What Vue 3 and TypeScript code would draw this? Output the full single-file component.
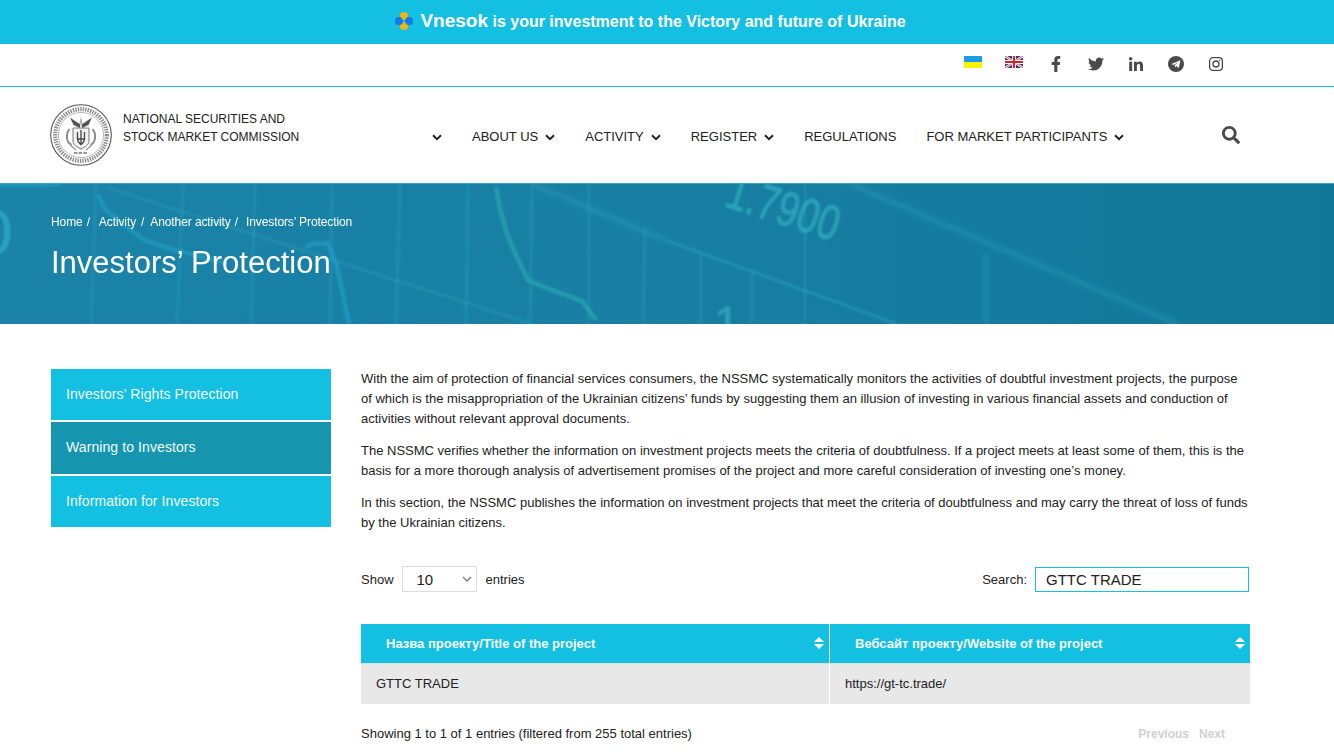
<script setup lang="ts">
const navItems: { label: string; caret: boolean }[] = [
  { label: '', caret: true },
  { label: 'ABOUT US', caret: true },
  { label: 'ACTIVITY', caret: true },
  { label: 'REGISTER', caret: true },
  { label: 'REGULATIONS', caret: false },
  { label: 'FOR MARKET PARTICIPANTS', caret: true },
]
const sideItems = [
  { label: 'Investors’ Rights Protection', active: false },
  { label: 'Warning to Investors', active: true },
  { label: 'Information for Investors', active: false },
]
</script>

<template>
  <div class="page">
    <div class="promo">
      <svg class="promo-mark" viewBox="0 0 18 18" width="18" height="18" aria-hidden="true">
        <circle cx="9" cy="4" r="4" fill="#f9b208" />
        <circle cx="9" cy="14" r="4" fill="#f9b208" />
        <circle cx="4" cy="9" r="4" fill="#1277e8" />
        <circle cx="14" cy="9" r="4" fill="#1277e8" />
        <path d="M6 6.5 L12 11.5" stroke="#14c0e0" stroke-width="1" />
      </svg>
      <span class="promo-text"><span class="promo-brand">Vnesok</span> is your investment to the Victory and future of Ukraine</span>
    </div>

    <div class="topbar">
      <svg class="flag" viewBox="0 0 18 12" width="18" height="12" aria-hidden="true">
        <rect width="18" height="6" fill="#1e9be8" />
        <rect y="6" width="18" height="6" fill="#fff200" />
      </svg>
      <svg class="flag flag-uk" viewBox="0 0 18 12" width="18" height="12" aria-hidden="true">
        <rect width="18" height="12" fill="#2a3a7c" />
        <path d="M0 0 L18 12 M18 0 L0 12" stroke="#fff" stroke-width="2.4" />
        <path d="M0 0 L18 12 M18 0 L0 12" stroke="#d8202f" stroke-width="0.8" />
        <path d="M9 0 V12 M0 6 H18" stroke="#fff" stroke-width="4" />
        <path d="M9 0 V12 M0 6 H18" stroke="#d8202f" stroke-width="2.2" />
      </svg>
      <div class="socials">
        <svg class="social" viewBox="0 0 320 512" aria-hidden="true"><path d="M279.14 288l14.22-92.66h-88.91v-60.13c0-25.35 12.42-50.06 52.24-50.06h40.42V6.26S260.43 0 225.36 0c-73.22 0-121.08 44.38-121.08 124.72v70.62H22.89V288h81.39v224h100.17V288z" /></svg>
        <svg class="social" viewBox="0 0 512 512" aria-hidden="true"><path d="M459.37 151.716c.325 4.548.325 9.097.325 13.645 0 138.72-105.583 298.558-298.558 298.558-59.452 0-114.68-17.219-161.137-47.106 8.447.974 16.568 1.299 25.34 1.299 49.055 0 94.213-16.568 130.274-44.832-46.132-.975-84.792-31.188-98.112-72.772 6.498.974 12.995 1.624 19.818 1.624 9.421 0 18.843-1.3 27.614-3.573-48.081-9.747-84.143-51.98-84.143-102.985v-1.299c13.969 7.797 30.214 12.67 47.431 13.319-28.264-18.843-46.781-51.005-46.781-87.391 0-19.492 5.197-37.36 14.294-52.954 51.655 63.675 129.3 105.258 216.365 109.807-1.624-7.797-2.599-15.918-2.599-24.04 0-57.828 46.782-104.934 104.934-104.934 30.213 0 57.502 12.67 76.67 33.137 23.715-4.548 46.456-13.32 66.599-25.34-7.798 24.366-24.366 44.833-46.132 57.827 21.117-2.273 41.584-8.122 60.426-16.243-14.292 20.791-32.161 39.308-52.628 54.253z" /></svg>
        <svg class="social" viewBox="0 0 448 512" aria-hidden="true"><path transform="translate(0 32)" d="M100.28 448H7.4V148.9h92.88zM53.79 108.1C24.09 108.1 0 83.5 0 53.8a53.79 53.79 0 0 1 107.58 0c0 29.7-24.1 54.3-53.79 54.3zM447.9 448h-92.68V302.4c0-34.7-.7-79.2-48.29-79.2-48.29 0-55.69 37.7-55.69 76.7V448h-92.78V148.9h89.08v40.8h1.3c12.4-23.5 42.69-48.3 87.88-48.3 94 0 111.28 61.9 111.28 142.3V448z" /></svg>
        <svg class="social" viewBox="0 0 16 16" aria-hidden="true">
          <circle cx="8" cy="8" r="8" />
          <path d="M3.4 8 L12.4 4.3 L10.8 12 L8.2 10 L7 11.6 L6.7 9.2 L10.6 5.8 L5.6 8.9 Z" fill="#fff" />
        </svg>
        <svg class="social social-line" viewBox="0 0 16 16" aria-hidden="true">
          <rect x="1.6" y="1.6" width="12.8" height="12.8" rx="3.4" />
          <circle cx="8" cy="8" r="3" />
          <circle class="dot" cx="11.8" cy="4.2" r="0.8" />
        </svg>
      </div>
    </div>

    <header class="header">
      <a class="brand">
        <svg class="seal" viewBox="0 0 62 62" width="62" height="62" aria-hidden="true">
          <circle cx="31" cy="31" r="30.3" fill="#fff" stroke="#555" stroke-width="1.1" />
          <circle cx="31" cy="31" r="25.8" fill="none" stroke="#8a8a8a" stroke-width="4.2" stroke-dasharray="1.4 1.1" />
          <circle cx="31" cy="31" r="22.6" fill="#fff" stroke="#888" stroke-width="0.6" />
          <path d="M31 12 L29.6 20 L20 13.5 L23.5 21 L30 24 Z M31 12 L32.4 20 L42 13.5 L38.5 21 L32 24 Z" fill="#555" />
          <path d="M23 24 H39 V37 C39 41 35 43 31 45 C27 43 23 41 23 37 Z" fill="#f1f1f1" stroke="#666" stroke-width="0.9" />
          <path d="M31 26 V41 M27.5 28 V35 C27.5 38 29.5 39 31 40.5 C32.5 39 34.5 38 34.5 35 V28 M27.5 35 H34.5" fill="none" stroke="#444" stroke-width="1.3" />
          <path d="M19.5 25 C15.5 30 16 38 21.5 41 M42.5 25 C46.5 30 46 38 40.5 41" fill="none" stroke="#8a8a8a" stroke-width="2" />
          <path d="M20 41 L26 46 M42 41 L36 46" stroke="#999" stroke-width="1.4" />
          <path d="M24 49 H38" stroke="#777" stroke-width="1.4" stroke-dasharray="3.5 1.2" />
        </svg>
        <span class="brand-text">NATIONAL SECURITIES AND<br />STOCK MARKET COMMISSION</span>
      </a>
      <nav class="nav">
        <a v-for="(item, i) in navItems" :key="i" class="nav-item">
          <span v-if="item.label">{{ item.label }}</span>
          <svg v-if="item.caret" class="caret" viewBox="0 0 10 7" width="10" height="7" aria-hidden="true"><path d="M1 1.2 L5 5.2 L9 1.2" fill="none" stroke="#222" stroke-width="2" /></svg>
        </a>
      </nav>
      <svg class="search-icon" viewBox="0 0 512 512" width="18" height="18" aria-hidden="true"><path d="M505 442.7L405.3 343c-4.5-4.5-10.6-7-17-7H372c27.6-35.3 44-79.7 44-128C416 93.1 322.9 0 208 0S0 93.1 0 208s93.1 208 208 208c48.3 0 92.7-16.4 128-44v16.3c0 6.4 2.5 12.5 7 17l99.7 99.7c9.4 9.4 24.6 9.4 33.9 0l28.3-28.3c9.4-9.4 9.4-24.6.1-34zM208 336c-70.7 0-128-57.2-128-128 0-70.7 57.2-128 128-128 70.7 0 128 57.2 128 128 0 70.7-57.2 128-128 128z" /></svg>
    </header>

    <section class="hero">
      <svg class="hero-art" viewBox="0 0 1334 141" preserveAspectRatio="none" aria-hidden="true">
        <defs>
          <filter id="soft" x="-5%" y="-5%" width="110%" height="110%"><feGaussianBlur stdDeviation="1.1" /></filter>
          <filter id="wide" x="-5%" y="-5%" width="110%" height="110%"><feGaussianBlur stdDeviation="2" /></filter>
        </defs>
        <g filter="url(#soft)" stroke="#3cb6cc" stroke-opacity=".22" stroke-width="3" fill="none">
          <path d="M96 0 L91 141 M183 0 L177 141 M255 0 L251 141 M332 0 L330 141 M400 0 L396 141 M468 0 L466 141 M532 0 L530 141 M589 0 V141 M645 45 L643 141 M701 70 V141 M752 87 V141 M805 0 V141" />
          <path d="M106 3 L532 141" />
          <path d="M667 57 L897 141" stroke-opacity=".3" />
        </g>
        <g filter="url(#wide)" stroke="#3cb6cc" stroke-opacity=".24" stroke-width="5" fill="none">
          <path d="M532 0 L667 57 M850 0 L1177 141 M986 70 V141" />
        </g>
        <g filter="url(#soft)" fill="none" stroke-width="4.5">
          <path d="M0 1 H40 L60 0 M98 10 L104 24 L122 40 L145 57 L170 65 L225 80" stroke="#22a8d0" stroke-opacity=".5" />
          <path d="M306 64 L314 60 L328 60 L336 80 L340 97 L349 141" stroke="#22a8d0" stroke-opacity=".55" />
          <path d="M496 3 L500 25 L506 47 L516 72 L528 97 L545 104 L574 115 L582 118 L596 137" stroke="#30b8b8" stroke-opacity=".5" />
        </g>
        <g filter="url(#soft)" font-family="'Liberation Sans', sans-serif" fill="#39bccc" fill-opacity=".55" stroke="#39bccc" stroke-opacity=".4" stroke-width="1">
          <text transform="translate(723 22) rotate(18) scale(1 1.3)" font-size="38">1.7900</text>
          <text x="-22" y="69" font-size="62">0</text>
          <text x="714" y="156" font-size="46">1</text>
        </g>
      </svg>
      <div class="hero-inner">
        <div class="crumbs">
          <span>Home</span><span class="c1">/</span><span class="c2">Activity</span><span class="c3">/</span><span class="c4">Another activity</span><span class="c5">/</span><span class="c6">Investors’ Protection</span>
        </div>
        <h1 class="title">Investors’ Protection</h1>
      </div>
    </section>

    <main class="content">
      <aside class="side">
        <a v-for="s in sideItems" :key="s.label" class="side-item" :class="{ active: s.active }">{{ s.label }}</a>
      </aside>
      <div class="main">
        <p>With the aim of protection of financial services consumers, the NSSMC systematically monitors the activities of doubtful investment projects, the purpose of which is the misappropriation of the Ukrainian citizens’ funds by suggesting them an illusion of investing in various financial assets and conduction of activities without relevant approval documents.</p>
        <p>The NSSMC verifies whether the information on investment projects meets the criteria of doubtfulness. If a project meets at least some of them, this is the basis for a more thorough analysis of advertisement promises of the project and more careful consideration of investing one’s money.</p>
        <p>In this section, the NSSMC publishes the information on investment projects that meet the criteria of doubtfulness and may carry the threat of loss of funds by the Ukrainian citizens.</p>

        <div class="controls">
          <label class="len">Show
            <span class="len-wrap">
              <select class="len-select"><option>10</option><option>25</option><option>50</option></select>
              <svg class="len-arrow" viewBox="0 0 10 6" width="10" height="6" aria-hidden="true"><path d="M1 1 L5 5 L9 1" fill="none" stroke="#777" stroke-width="1.3" /></svg>
            </span>
            entries</label>
          <label class="filter">Search:
            <input class="filter-input" type="text" value="GTTC TRADE" />
          </label>
        </div>

        <div class="table">
          <div class="th th-a">Назва проекту/Title of the project<span class="sort"><i class="up"></i><i class="down"></i></span></div>
          <div class="th th-b">Вебсайт проекту/Website of the project<span class="sort"><i class="up"></i><i class="down"></i></span></div>
          <div class="td td-a">GTTC TRADE</div>
          <div class="td td-b">https://gt-tc.trade/</div>
        </div>

        <div class="foot">
          <span>Showing 1 to 1 of 1 entries (filtered from 255 total entries)</span>
          <span class="pager"><span>Previous</span><span>Next</span></span>
        </div>
      </div>
    </main>
  </div>
</template>

<style>
html, body { margin: 0; overflow: hidden; background: #fff; }
</style>

<style scoped>
.page { font-family: "Liberation Sans", Arial, sans-serif; color: #222; width: 1334px; font-size: 13px; }

.promo { height: 44px; background: #14c0e1; display: flex; align-items: center; justify-content: center; gap: 7px; color: #fff; padding-right: 33px; box-sizing: border-box; }
.promo-mark { flex: none; margin-top: -2px; }
.promo-text { font-size: 16px; font-weight: 700; margin-top: -2px; }
.promo-brand { font-size: 19px; }

.topbar { height: 42px; border-bottom: 1px solid #14c0e1; display: flex; align-items: center; padding-left: 964px; }
.flag { display: block; margin-top: -6px; }
.flag-uk { margin-left: 23px; }
.socials { display: flex; align-items: center; margin-left: 13px; margin-top: -2px; }
.social { width: 16px; height: 16px; fill: #4a4a4a; margin: 0 12px; display: block; }
.social-line { fill: none; stroke: #4a4a4a; stroke-width: 1.3; }
.social-line .dot { fill: #4a4a4a; stroke: none; }

.header { height: 96px; display: flex; align-items: center; padding-left: 50px; }
.brand { display: flex; align-items: center; gap: 11px; width: 382px; flex: none; }
.seal { display: block; flex: none; }
.brand-text { font-size: 12px; line-height: 18px; color: #222; margin-top: -14px; }
.nav { display: flex; align-items: center; font-size: 13px; color: #222; flex: none; padding-top: 2px; }
.nav-item { display: flex; align-items: center; gap: 7px; margin-right: 30px; }
.caret { display: block; margin-top: 3px; }
.search-icon { fill: #4a4a4a; margin-left: 68px; flex: none; }

.hero { height: 141px; background: linear-gradient(90deg, #1b82a8 0%, #187fa3 50%, #127899 100%); position: relative; overflow: hidden; box-sizing: border-box; border-top: 1px solid #37a6c6; }
.hero-art { position: absolute; left: 0; top: 0; width: 100%; height: 100%; }
.hero-inner { position: relative; padding: 31px 0 0 51px; color: #fff; }
.crumbs { font-size: 12px; line-height: 14px; display: flex; letter-spacing: -0.1px; }
.c1 { margin-left: 4px; }
.c2 { margin-left: 9px; }
.c3 { margin-left: 5px; }
.c4 { margin-left: 6px; }
.c5 { margin-left: 4px; }
.c6 { margin-left: 8px; }
.title { margin: 12px 0 0; font-size: 31px; line-height: 44px; font-weight: 400; }

.content { display: flex; padding: 45px 84px 0 51px; gap: 30px; }
.side { width: 280px; flex: none; display: flex; flex-direction: column; gap: 2px; }
.side-item { height: 51.33px; display: flex; align-items: center; padding: 0 0 1px 15px; box-sizing: border-box; background: #14c0e1; color: #f2fbfd; font-size: 14px; letter-spacing: .09px; }
.side-item.active { background: #1596ae; }
.main { flex: 1; min-width: 0; }
.main p { margin: 0 0 12px; font-size: 13px; line-height: 20px; color: #222; }

.controls { display: flex; justify-content: space-between; align-items: center; margin-top: 33px; padding-right: 1px; }
.len { display: flex; align-items: center; gap: 9px; }
.len-wrap { position: relative; display: block; width: 75px; height: 26px; margin-left: -1px; }
.len-select { appearance: none; display: block; width: 75px; height: 26px; border: 1px solid #ddd; background: #fff; font: 15px "Liberation Sans", Arial, sans-serif; color: #222; padding-left: 14px; border-radius: 0; }
.len-arrow { position: absolute; right: 5px; top: 10px; pointer-events: none; }
.filter { display: flex; align-items: center; gap: 8px; }
.filter-input { width: 214px; height: 25px; box-sizing: border-box; border: 1px solid #14c0e1; font: 15px "Liberation Sans", Arial, sans-serif; color: #222; padding: 0 10px; outline: none; }

.table { display: grid; grid-template-columns: 468px 421px; margin-top: 32px; }
.th { height: 39px; background: #14c0e1; color: #f6fcfe; font-weight: 700; font-size: 13px; display: flex; align-items: center; padding-left: 25px; position: relative; border-bottom: 1px solid #ddd; }
.th-b { border-left: 1px solid #fff; }
.sort { position: absolute; right: 5px; top: 13px; display: flex; flex-direction: column; gap: 2px; }
.up { display: block; width: 0; height: 0; border: 5px solid transparent; border-top: 0; border-bottom: 5px solid #fff; }
.down { display: block; width: 0; height: 0; border: 5px solid transparent; border-bottom: 0; border-top: 5px solid #fff; }
.td { height: 40px; box-sizing: border-box; background: #e8e8e8; display: flex; align-items: center; padding: 0 0 2px 15px; }
.td-b { border-left: 1px solid #fff; }

.foot { display: flex; justify-content: space-between; align-items: center; margin-top: 22px; }
.pager { display: flex; gap: 10px; color: #cfcfcf; font-weight: 700; font-size: 12px; margin-right: 25px; }
</style>
